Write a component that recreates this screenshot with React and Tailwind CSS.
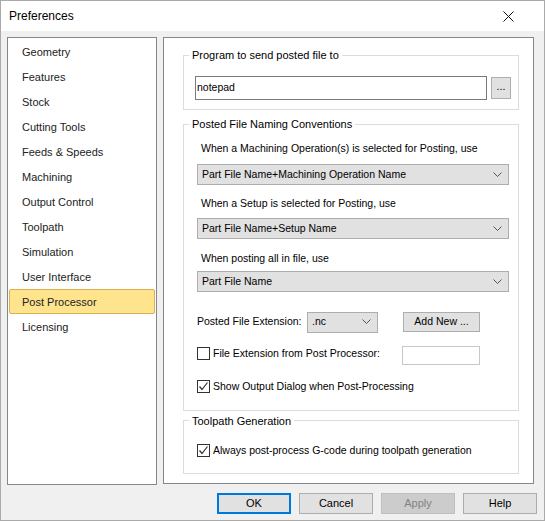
const navItems = [
  "Geometry",
  "Features",
  "Stock",
  "Cutting Tools",
  "Feeds & Speeds",
  "Machining",
  "Output Control",
  "Toolpath",
  "Simulation",
  "User Interface",
  "Post Processor",
  "Licensing",
];

const font = { fontFamily: '"Liberation Sans", Arial, sans-serif' };

function Chevron() {
  return (
    <svg width="9" height="6" viewBox="0 0 9 6" className="shrink-0">
      <polyline points="0.5,0.5 4.5,4.5 8.5,0.5" fill="none" stroke="#555" strokeWidth="1" />
    </svg>
  );
}

function Dropdown({ value, className = "" }) {
  return (
    <div
      className={`h-[21px] flex items-center justify-between bg-[#e1e1e1] border border-[#adadad] pl-[4px] pr-[6px] ${className}`}
    >
      <span>{value}</span>
      <Chevron />
    </div>
  );
}

function Checkbox({ checked, label }) {
  return (
    <div className="flex items-center gap-[3px]">
      <div className="w-[13px] h-[13px] bg-white border border-[#333] flex items-center justify-center">
        {checked && (
          <svg width="11" height="11" viewBox="0 0 11 11">
            <polyline points="1.5,5.5 4,8.5 9.5,1.5" fill="none" stroke="#333" strokeWidth="1.2" />
          </svg>
        )}
      </div>
      <span>{label}</span>
    </div>
  );
}

function Group({ title, className = "", children }) {
  return (
    <fieldset className={`border border-[#dcdcdc] ${className}`}>
      <legend className="ml-[5px] px-[3px] leading-[14px] text-[11px]">{title}</legend>
      {children}
    </fieldset>
  );
}

function Button({ children, primary, disabled }) {
  return (
    <div
      className={`w-[74px] h-[21px] flex items-center justify-center ${
        primary
          ? "border-2 border-[#0078d7] bg-[#e1e1e1]"
          : disabled
          ? "border border-[#bfbfbf] bg-[#cccccc] text-[#838383]"
          : "border border-[#adadad] bg-[#e1e1e1]"
      }`}
    >
      {children}
    </div>
  );
}

export default function App() {
  const selected = "Post Processor";

  return (
    <div
      className="w-[545px] h-[521px] border border-[#aaaaaa] bg-[#f0f0f0] flex flex-col text-[10.5px] text-black"
      style={font}
    >
      {/* Title bar */}
      <div className="h-[30px] bg-white flex items-center justify-between pl-[8px] pr-[30px] shrink-0">
        <span className="text-[12px]">Preferences</span>
        <svg width="11" height="11" viewBox="0 0 11 11">
          <path d="M0.5 0.5 L10.5 10.5 M10.5 0.5 L0.5 10.5" stroke="#111" strokeWidth="1" />
        </svg>
      </div>

      {/* Body */}
      <div className="flex gap-[6px] pl-[6px] pt-[6px]">
        {/* Left list */}
        <div className="w-[150px] h-[448px] bg-white border border-[#828790] pt-[1px] px-[1px] text-[11px] text-[#222]">
          {navItems.map((item) => (
            <div
              key={item}
              className={`h-[25px] flex items-center pl-[12px] pt-[1px] rounded-[2px] border ${
                item === selected
                  ? "bg-[#ffe48e] border-[#e0ae52]"
                  : "border-transparent"
              }`}
            >
              {item}
            </div>
          ))}
        </div>

        {/* Right panel */}
        <div className="w-[371px] h-[447px] bg-white border border-[#828790] pt-[10px] pl-[19px] pr-[14px]">
          <Group title="Program to send posted file to" className="pb-[9px]">
            <div className="flex items-center gap-[4px] mt-[14px] pl-[11px]">
              <div className="w-[292px] h-[24px] border border-[#7a7a7a] bg-white flex items-center pl-[1px]">
                notepad
              </div>
              <div className="w-[20px] h-[22px] bg-[#e1e1e1] border border-[#adadad] flex items-center justify-center leading-none pb-[3px]">
                ...
              </div>
            </div>
          </Group>

          <Group title="Posted File Naming Conventions" className="mt-[7px] pb-[15px]">
            <div className="pl-[13px] pr-[9px]">
              <div className="mt-[10px] pl-[4px] leading-[14px]">
                When a Machining Operation(s) is selected for Posting, use
              </div>
              <Dropdown value="Part File Name+Machining Operation Name" className="mt-[9px]" />
              <div className="mt-[11px] pl-[4px] leading-[14px]">
                When a Setup is selected for Posting, use
              </div>
              <Dropdown value="Part File Name+Setup Name" className="mt-[8px]" />
              <div className="mt-[12px] pl-[4px] leading-[14px]">When posting all in file, use</div>
              <Dropdown value="Part File Name" className="mt-[6px]" />

              <div className="flex items-center mt-[20px] h-[20px]">
                <span className="w-[110px]">Posted File Extension:</span>
                <Dropdown value=".nc" className="w-[71px] h-[20px]" />
                <div className="ml-[25px] w-[77px] h-[20px] bg-[#e1e1e1] border border-[#adadad] flex items-center justify-center">
                  Add New ...
                </div>
              </div>

              <div className="flex items-start mt-[14px] h-[19px]">
                <div className="w-[205px]">
                  <Checkbox label="File Extension from Post Processor:" />
                </div>
                <div className="w-[78px] h-[19px] bg-white border border-[#c8c8c8]" />
              </div>

              <div className="mt-[14px]">
                <Checkbox checked label="Show Output Dialog when Post-Processing" />
              </div>
            </div>
          </Group>

          <Group title="Toolpath Generation" className="mt-[3px] pb-[14px]">
            <div className="mt-[15px] pl-[13px]">
              <Checkbox checked label="Always post-process G-code during toolpath generation" />
            </div>
          </Group>
        </div>
      </div>

      {/* Buttons */}
      <div className="flex justify-end gap-[8px] pr-[7px] mt-[8px] text-[11px]">
        <Button primary>OK</Button>
        <Button>Cancel</Button>
        <Button disabled>Apply</Button>
        <Button>Help</Button>
      </div>
    </div>
  );
}
